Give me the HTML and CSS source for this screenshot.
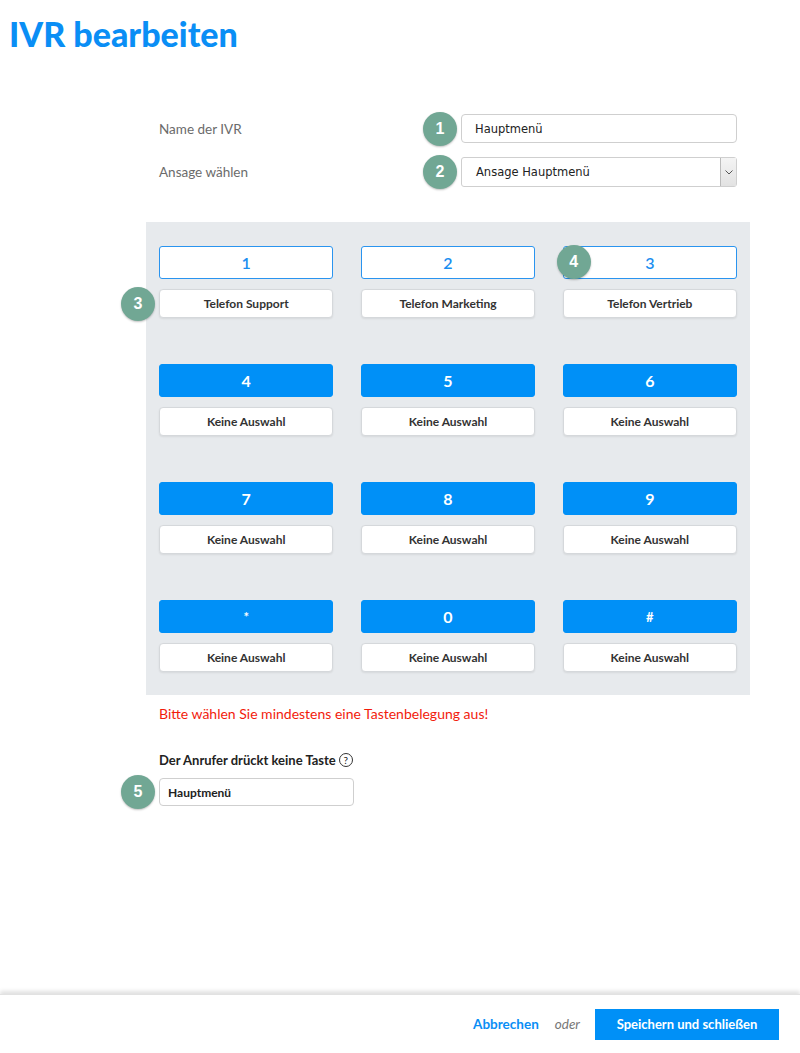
FILE: index.html
```html
<!DOCTYPE html>
<html lang="de">
<head>
    <meta charset="UTF-8">
    <meta name="viewport" content="width=device-width, initial-scale=1.0">
    <title>IVR bearbeiten</title>
    <link rel="stylesheet" href="styles.css">
</head>
<body>
    <div class="page">
        <h1 class="title">IVR bearbeiten</h1>

        <main class="content">
            <div class="settings">
                <label class="settings-label" for="ivr-name">Name der IVR</label>
                <div class="field">
                    <span class="marker">1</span>
                    <input class="text-input" id="ivr-name" type="text" value="Hauptmenü">
                </div>

                <label class="settings-label">Ansage wählen</label>
                <div class="field">
                    <span class="marker">2</span>
                    <div class="select-box">
                        <span class="select-value">Ansage Hauptmenü</span>
                        <span class="select-arrow">
                            <svg width="8" height="5" viewBox="0 0 8 5"><path d="M0.5 0.5 L4 4 L7.5 0.5" fill="none" stroke="#555" stroke-width="1"/></svg>
                        </span>
                    </div>
                </div>
            </div>

            <div class="keypad">
                <div class="key-cell">
                    <button class="key key-outline">1</button>
                    <div class="field">
                        <span class="marker">3</span>
                        <button class="target">Telefon Support</button>
                    </div>
                </div>
                <div class="key-cell">
                    <button class="key key-outline">2</button>
                    <button class="target">Telefon Marketing</button>
                </div>
                <div class="key-cell">
                    <div class="field">
                        <span class="marker marker-key">4</span>
                        <button class="key key-outline">3</button>
                    </div>
                    <button class="target">Telefon Vertrieb</button>
                </div>

                <div class="key-cell">
                    <button class="key">4</button>
                    <button class="target">Keine Auswahl</button>
                </div>
                <div class="key-cell">
                    <button class="key">5</button>
                    <button class="target">Keine Auswahl</button>
                </div>
                <div class="key-cell">
                    <button class="key">6</button>
                    <button class="target">Keine Auswahl</button>
                </div>

                <div class="key-cell">
                    <button class="key">7</button>
                    <button class="target">Keine Auswahl</button>
                </div>
                <div class="key-cell">
                    <button class="key">8</button>
                    <button class="target">Keine Auswahl</button>
                </div>
                <div class="key-cell">
                    <button class="key">9</button>
                    <button class="target">Keine Auswahl</button>
                </div>

                <div class="key-cell">
                    <button class="key key-small">*</button>
                    <button class="target">Keine Auswahl</button>
                </div>
                <div class="key-cell">
                    <button class="key">0</button>
                    <button class="target">Keine Auswahl</button>
                </div>
                <div class="key-cell">
                    <button class="key key-small">#</button>
                    <button class="target">Keine Auswahl</button>
                </div>
            </div>

            <p class="error">Bitte wählen Sie mindestens eine Tastenbelegung aus!</p>

            <div class="fallback">
                <div class="fallback-title">
                    Der Anrufer drückt keine Taste
                    <span class="help">?</span>
                </div>
                <div class="field">
                    <span class="marker">5</span>
                    <input class="text-input fallback-input" type="text" value="Hauptmenü">
                </div>
            </div>
        </main>

        <footer class="actions">
            <a class="cancel" href="#">Abbrechen</a>
            <span class="or">oder</span>
            <button class="save">Speichern und schließen</button>
        </footer>
    </div>
</body>
</html>
```

FILE: styles.css
```css
body {
    margin: 0;
    font-family: 'Lato', 'Noto Sans', sans-serif;
    color: #333;
    background: #fff;
}

.page {
    display: flex;
    flex-direction: column;
    min-height: 100vh;
}

.title {
    margin: 0;
    padding: 17px 0 0 9px;
    font-size: 34px;
    line-height: 34px;
    font-weight: 900;
    color: #0a8ef5;
}

.content {
    margin-left: 146px;
    width: 604px;
}

/* name + announcement */
.settings {
    margin-top: 63px;
    padding: 0 13px;
    display: grid;
    grid-template-columns: 302px 276px;
    row-gap: 14px;
    align-items: center;
}

.settings-label {
    font-size: 13.5px;
    color: #6b6b6b;
}

.field {
    position: relative;
}

.marker {
    position: absolute;
    left: -38px;
    top: 50%;
    margin-top: -17px;
    width: 34px;
    height: 34px;
    border-radius: 50%;
    background: #71a794;
    color: #fff;
    font-family: 'Liberation Sans', Arial, sans-serif;
    font-weight: bold;
    font-size: 16px;
    line-height: 34px;
    text-align: center;
    box-shadow: 0 1px 2px rgba(0, 0, 0, 0.25);
    z-index: 2;
}

.marker-key {
    left: -6px;
    top: -1px;
    margin-top: 0;
}

.text-input {
    display: block;
    box-sizing: border-box;
    width: 100%;
    height: 29px;
    padding: 0 13px;
    border: 1px solid #cfcfcf;
    border-radius: 4px;
    font-family: 'DejaVu Sans', Tahoma, sans-serif;
    font-size: 11.5px;
    color: #222;
    background: #fff;
    outline: none;
}

.select-box {
    display: flex;
    align-items: center;
    box-sizing: border-box;
    height: 30px;
    border: 1px solid #cfcfcf;
    border-radius: 3px;
    background: #fff;
}

.select-value {
    flex: 1;
    padding-left: 14px;
    font-family: 'DejaVu Sans', Tahoma, sans-serif;
    font-size: 11.5px;
    color: #222;
}

.select-arrow {
    display: flex;
    align-items: center;
    justify-content: center;
    width: 15px;
    height: 28px;
    border-left: 1px solid #bbb;
    background: linear-gradient(#f4f4f4, #e2e2e2);
}

/* keypad */
.keypad {
    margin-top: 35px;
    padding: 24px 13px 23px;
    background: #e7eaed;
    display: grid;
    grid-template-columns: repeat(3, 1fr);
    column-gap: 27.5px;
    row-gap: 46px;
}

.key-cell {
    display: flex;
    flex-direction: column;
    gap: 10px;
}

.key {
    display: block;
    width: 100%;
    height: 33px;
    border: 1px solid #0090f7;
    border-radius: 3px;
    background: #0090f7;
    color: #fff;
    font-family: inherit;
    font-size: 16px;
    font-weight: bold;
    cursor: pointer;
}

.key-small {
    font-size: 13px;
}

.key-outline {
    background: #fff;
    color: #1a8ef0;
    font-weight: 600;
    border-color: #2a94ef;
}

.target {
    display: block;
    width: 100%;
    height: 29px;
    border: 1px solid #d5d8db;
    border-radius: 4px;
    background: #fff;
    color: #333;
    font-family: inherit;
    font-size: 12px;
    font-weight: bold;
    cursor: pointer;
    box-shadow: 0 1px 2px rgba(0, 0, 0, 0.08);
}

.error {
    margin: 10px 0 0 13px;
    font-size: 14px;
    line-height: 18px;
    color: #f21b0c;
}

/* no key pressed */
.fallback {
    margin: 29px 0 0 13px;
    width: 195px;
}

.fallback-title {
    display: flex;
    align-items: center;
    gap: 3px;
    white-space: nowrap;
    font-size: 13px;
    font-weight: bold;
    color: #222;
    margin-bottom: 10px;
}

.help {
    display: inline-block;
    width: 12px;
    height: 12px;
    border: 1px solid #333;
    border-radius: 50%;
    font-size: 10px;
    line-height: 12px;
    text-align: center;
    font-weight: normal;
}

.fallback-input {
    height: 28px;
    padding: 0 8px;
    font-family: 'Lato', sans-serif;
    font-weight: bold;
    font-size: 12px;
}

/* bottom bar */
.actions {
    margin-top: auto;
    height: 58px;
    display: flex;
    align-items: center;
    justify-content: flex-end;
    padding-right: 21px;
    box-shadow: 0 -3px 4px rgba(0, 0, 0, 0.12);
    border-top: 1px solid #e2e2e2;
}

.cancel {
    color: #0a8ef5;
    font-weight: bold;
    font-size: 13.5px;
    text-decoration: none;
}

.or {
    margin: 0 15px 0 16px;
    font-size: 13.5px;
    font-style: italic;
    color: #777;
}

.save {
    width: 184px;
    height: 31px;
    border: none;
    background: #0090f7;
    color: #fff;
    font-family: inherit;
    font-size: 13px;
    font-weight: bold;
    cursor: pointer;
}
```
